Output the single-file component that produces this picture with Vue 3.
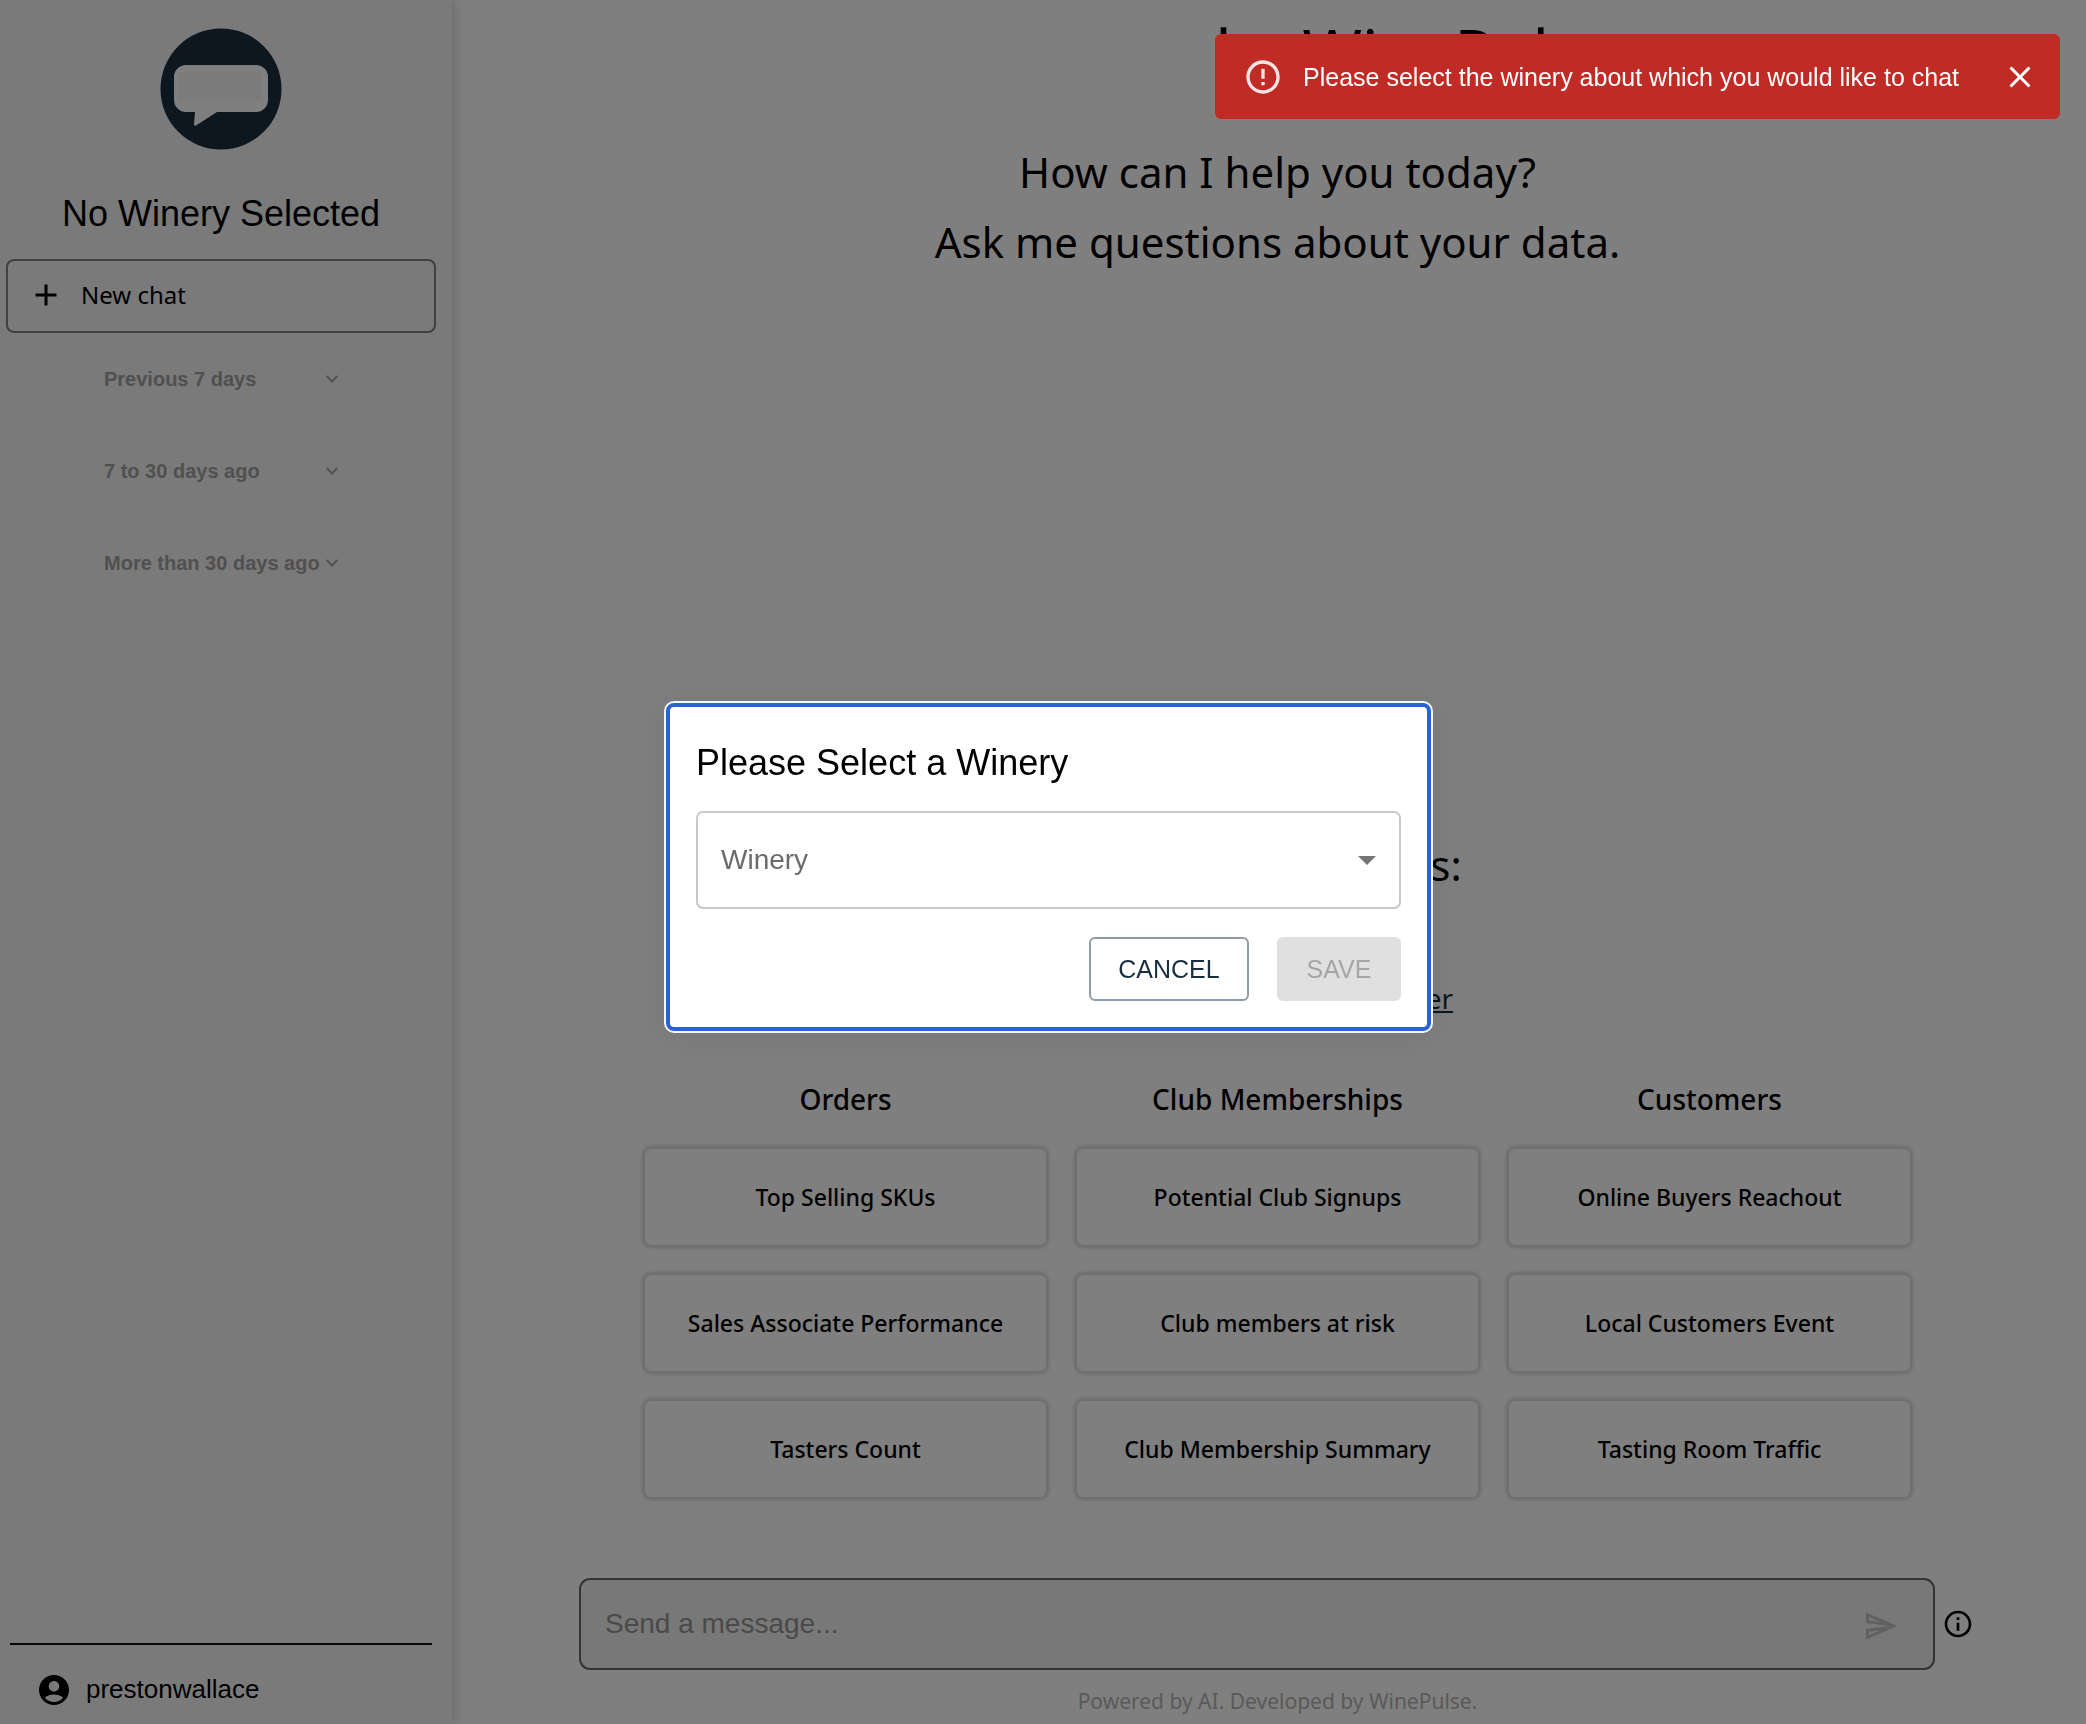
<script setup>
import { ref } from 'vue'

const periods = ['Previous 7 days', '7 to 30 days ago', 'More than 30 days ago']

const promptGroups = [
  { title: 'Orders', prompts: ['Top Selling SKUs', 'Sales Associate Performance', 'Tasters Count'] },
  { title: 'Club Memberships', prompts: ['Potential Club Signups', 'Club members at risk', 'Club Membership Summary'] },
  { title: 'Customers', prompts: ['Online Buyers Reachout', 'Local Customers Event', 'Tasting Room Traffic'] },
]

const message = ref('')
const winery = ref('')
</script>

<template>
  <div class="page">
    <aside class="sidebar">
      <svg class="logo" viewBox="0 0 122 122" aria-hidden="true">
        <circle cx="61" cy="61" r="60.5" fill="#1a2e40" />
        <path
          d="M26 37h70a12 12 0 0 1 12 12v23a12 12 0 0 1-12 12H57L36 97.500q-2 1-2-1L35 84H26a12 12 0 0 1-12-12V49a12 12 0 0 1 12-12z"
          fill="#fff"
        />
        <path d="M18 44h83v29H18z" fill="#f7f7f7" />
      </svg>
      <h2 class="winery-name">No Winery Selected</h2>
      <button class="new-chat" type="button">
        <svg viewBox="0 0 36 36" aria-hidden="true">
          <path d="M18 7.500v21M7.500 18h21" fill="none" stroke="#000" stroke-width="3" />
        </svg>
        <span>New chat</span>
      </button>
      <nav class="history">
        <button v-for="period in periods" :key="period" class="period" type="button">
          <span>{{ period }}</span>
          <svg viewBox="0 0 12 12" aria-hidden="true">
            <path d="M.7 3l5.300 5.500L11.300 3" fill="none" stroke="#a4a4a4" stroke-width="2" />
          </svg>
        </button>
      </nav>
      <div class="account">
        <svg viewBox="0 0 24 24" aria-hidden="true">
          <path
            d="M12 2C6.480 2 2 6.480 2 12s4.480 10 10 10 10-4.480 10-10S17.520 2 12 2zm0 4c1.930 0 3.500 1.570 3.500 3.500S13.930 13 12 13s-3.500-1.570-3.500-3.500S10.070 6 12 6zm0 14c-2.030 0-4.430-.820-6.140-2.880C7.550 15.800 9.680 15 12 15s4.450.800 6.140 2.120C16.430 19.180 14.030 20 12 20z"
          />
        </svg>
        <span>prestonwallace</span>
      </div>
    </aside>

    <main class="main">
      <h1 class="brand">by WinePulse</h1>
      <p class="intro">How can I help you today?<br />Ask me questions about your data.</p>

      <section class="examples">
        <h2 class="examples-title">Sample Questions:</h2>
        <a class="guide" href="#">View Questions in Explorer</a>
        <div class="groups">
          <div v-for="group in promptGroups" :key="group.title" class="group">
            <h3>{{ group.title }}</h3>
            <button v-for="prompt in group.prompts" :key="prompt" class="prompt" type="button">
              {{ prompt }}
            </button>
          </div>
        </div>
      </section>

      <form class="composer" @submit.prevent>
        <div class="field">
          <input v-model="message" type="text" placeholder="Send a message..." aria-label="Send a message" />
          <button class="icon-button" type="submit" aria-label="Send">
            <svg class="send" viewBox="0 0 24 24" aria-hidden="true">
              <path
                d="M4.010 6.030l7.510 3.220-7.520-1 .010-2.220m7.500 8.720L4 17.970v-2.220l7.510-1M2.010 3L2 10l15 2-15 2 .010 7L23 12 2.010 3z"
                fill="#c2c2c2"
              />
            </svg>
          </button>
        </div>
        <button class="icon-button" type="button" aria-label="Information">
          <svg class="info" viewBox="0 0 24 24" aria-hidden="true">
            <path
              d="M11 7h2v2h-2zm0 4h2v6h-2zm1-9C6.480 2 2 6.480 2 12s4.480 10 10 10 10-4.480 10-10S17.520 2 12 2zm0 18c-4.410 0-8-3.590-8-8s3.590-8 8-8 8 3.590 8 8-3.590 8-8 8z"
            />
          </svg>
        </button>
      </form>
      <p class="credit">Powered by AI. Developed by WinePulse.</p>
    </main>

    <div class="backdrop">
      <div class="dialog" role="dialog" aria-modal="true" aria-labelledby="dialog-title">
        <h2 id="dialog-title">Please Select a Winery</h2>
        <div class="select-wrap">
          <select v-model="winery" aria-label="Winery">
            <option value="">Winery</option>
          </select>
          <svg viewBox="0 0 18 9" aria-hidden="true"><path d="M0 0h18L9 9z" fill="#757575" /></svg>
        </div>
        <div class="actions">
          <button class="cancel" type="button">CANCEL</button>
          <button class="save" type="button" disabled>SAVE</button>
        </div>
      </div>
    </div>

    <div class="toast" role="alert">
      <svg class="alert-icon" viewBox="0 0 24 24" aria-hidden="true">
        <path
          d="M11 15h2v2h-2zm0-8h2v6h-2zm.990-5C6.470 2 2 6.480 2 12s4.470 10 9.990 10C17.520 22 22 17.520 22 12S17.520 2 11.990 2zM12 20c-4.420 0-8-3.580-8-8s3.580-8 8-8 8 3.580 8 8-3.580 8-8 8z"
          fill="#fbe4e3"
        />
      </svg>
      <span>Please select the winery about which you would like to chat</span>
      <button class="icon-button" type="button" aria-label="Close">
        <svg class="close" viewBox="0 0 24 24" aria-hidden="true">
          <path
            d="M19 6.410L17.590 5 12 10.590 6.410 5 5 6.410 10.590 12 5 17.590 6.410 19 12 13.410 17.590 19 19 17.590 13.410 12z"
            fill="#fff"
          />
        </svg>
      </button>
    </div>
  </div>
</template>

<style>
body {
  margin: 0;
}
</style>

<style scoped>
.page,
.page * {
  box-sizing: border-box;
}

.page {
  display: flex;
  min-height: 100vh;
  background: #fff;
  color: #000;
  font-family: "Liberation Sans", Arial, sans-serif;
}

h1,
h2,
h3,
p {
  margin: 0;
  font-weight: 400;
}

button {
  margin: 0;
  padding: 0;
  border: 0;
  background: none;
  color: inherit;
  font: inherit;
}

svg {
  display: block;
  flex: none;
}

.sidebar {
  position: relative;
  display: flex;
  flex: none;
  flex-direction: column;
  width: 452px;
  padding: 28px 16px 0 6px;
  background: #f5f5f5;
  box-shadow: 2px 0 12px rgba(0, 0, 0, 0.18);
}

.logo {
  width: 122px;
  height: 122px;
  margin: 0 auto;
}

.winery-name {
  margin: 42px 0 23px;
  font-size: 36px;
  line-height: 44px;
  text-align: center;
}

.new-chat {
  display: flex;
  align-items: center;
  gap: 17px;
  height: 74px;
  padding: 0 20px 3px;
  border: 2px solid #828282;
  border-radius: 8px;
  font-family: "Noto Sans", sans-serif;
  font-size: 24px;
}

.new-chat svg {
  width: 36px;
  height: 36px;
}

.history {
  display: flex;
  flex: 1;
  flex-direction: column;
  align-items: center;
}

.period {
  display: flex;
  align-items: center;
  justify-content: space-between;
  width: 234px;
  height: 92px;
  color: #a0a0a0;
  font-size: 20px;
  font-weight: 700;
  white-space: nowrap;
}

.period svg {
  width: 12px;
  height: 12px;
}

.account {
  display: flex;
  align-items: center;
  gap: 14px;
  height: 81px;
  margin: 0 4px;
  padding: 10px 26px 0;
  border-top: 2px solid #111;
  font-size: 26px;
}

.account svg {
  width: 36px;
  height: 36px;
}

.main {
  display: flex;
  flex: 1;
  flex-direction: column;
  min-width: 0;
  padding: 10px 0 8px 17px;
  font-family: "Noto Sans", sans-serif;
}

.brand {
  padding-left: 276px;
  font-size: 64px;
  line-height: 84px;
  text-align: center;
}

.intro {
  margin-top: 43px;
  font-size: 42px;
  line-height: 70px;
  text-align: center;
}

.examples {
  display: flex;
  flex-direction: column;
  align-items: center;
  margin-top: auto;
  padding: 0 174px;
}

.examples-title {
  font-size: 42px;
  line-height: 70px;
}

.guide {
  margin: 78px 0 62px;
  color: #1a2e40;
  font-size: 28px;
  line-height: 40px;
}

.groups {
  display: grid;
  grid-template-columns: repeat(3, 1fr);
  gap: 27px;
  width: 100%;
}

.group {
  display: flex;
  flex-direction: column;
  gap: 26px;
}

.group h3 {
  padding-bottom: 3px;
  font-size: 28px;
  font-weight: 500;
  line-height: 38px;
  text-align: center;
}

.prompt {
  height: 100px;
  border: 2px solid #dedee6;
  border-radius: 8px;
  box-shadow: 0 0 4px rgba(0, 0, 0, 0.25);
  font-size: 23px;
  font-weight: 500;
}

.composer {
  display: flex;
  align-items: center;
  gap: 7px;
  margin-top: 79px;
  padding: 0 112px 0 110px;
}

.field {
  display: flex;
  flex: 1;
  align-items: center;
  height: 92px;
  padding: 0 34px 0 24px;
  border: 2px solid #66686f;
  border-radius: 11px;
  background: #f0f0f0;
}

.field input {
  flex: 1;
  min-width: 0;
  padding: 0;
  border: 0;
  outline: 0;
  background: none;
  font-family: "Liberation Sans", Arial, sans-serif;
  font-size: 28px;
}

.field input::placeholder {
  color: #949494;
  opacity: 1;
}

.field .icon-button {
  padding-top: 4px;
}

.send {
  width: 36px;
  height: 36px;
}

.info {
  width: 32px;
  height: 32px;
}

.credit {
  margin-top: 16px;
  color: #b4b4b4;
  font-size: 21px;
  line-height: 30px;
  text-align: center;
}

.backdrop {
  position: fixed;
  inset: 0;
  display: flex;
  align-items: center;
  justify-content: center;
  padding: 10px 0 0 11px;
  background: rgba(0, 0, 0, 0.5);
}

.dialog {
  width: 765px;
  padding: 26px;
  border: 4px solid #2a62cf;
  border-radius: 8px;
  background: #fff;
  box-shadow: 0 0 0 2px #f4f6fa, 0 4px 40px rgba(0, 0, 0, 0.1);
}

.dialog h2 {
  margin: 8px 0 26px;
  font-size: 36px;
  line-height: 44px;
}

.select-wrap {
  position: relative;
}

.select-wrap select {
  display: block;
  width: 100%;
  height: 98px;
  padding: 0 60px 2px 23px;
  border: 2px solid #c8c8c8;
  border-radius: 7px;
  appearance: none;
  background: #fff;
  color: #6b6b6b;
  font: 28px "Liberation Sans", Arial, sans-serif;
}

.select-wrap svg {
  position: absolute;
  top: 45px;
  right: 25px;
  width: 18px;
  height: 9px;
  pointer-events: none;
}

.actions {
  display: flex;
  justify-content: flex-end;
  gap: 28px;
  margin-top: 28px;
}

.actions button {
  height: 64px;
  border-radius: 6px;
  font-size: 25px;
}

.actions .cancel {
  width: 160px;
  border: 2px solid #8f9ba6;
  color: #1a2e40;
}

.actions .save {
  width: 124px;
  background: #e0e0e0;
  color: #a6a6a6;
}

.toast {
  position: fixed;
  top: 34px;
  right: 26px;
  display: flex;
  align-items: center;
  height: 85px;
  padding: 1px 22px 0 28px;
  border-radius: 6px;
  background: #c02b26;
  color: #fff;
  font-size: 25px;
}

.toast span {
  margin: 0 43px 0 20px;
}

.alert-icon {
  width: 40px;
  height: 40px;
}

.close {
  width: 36px;
  height: 36px;
}
</style>
